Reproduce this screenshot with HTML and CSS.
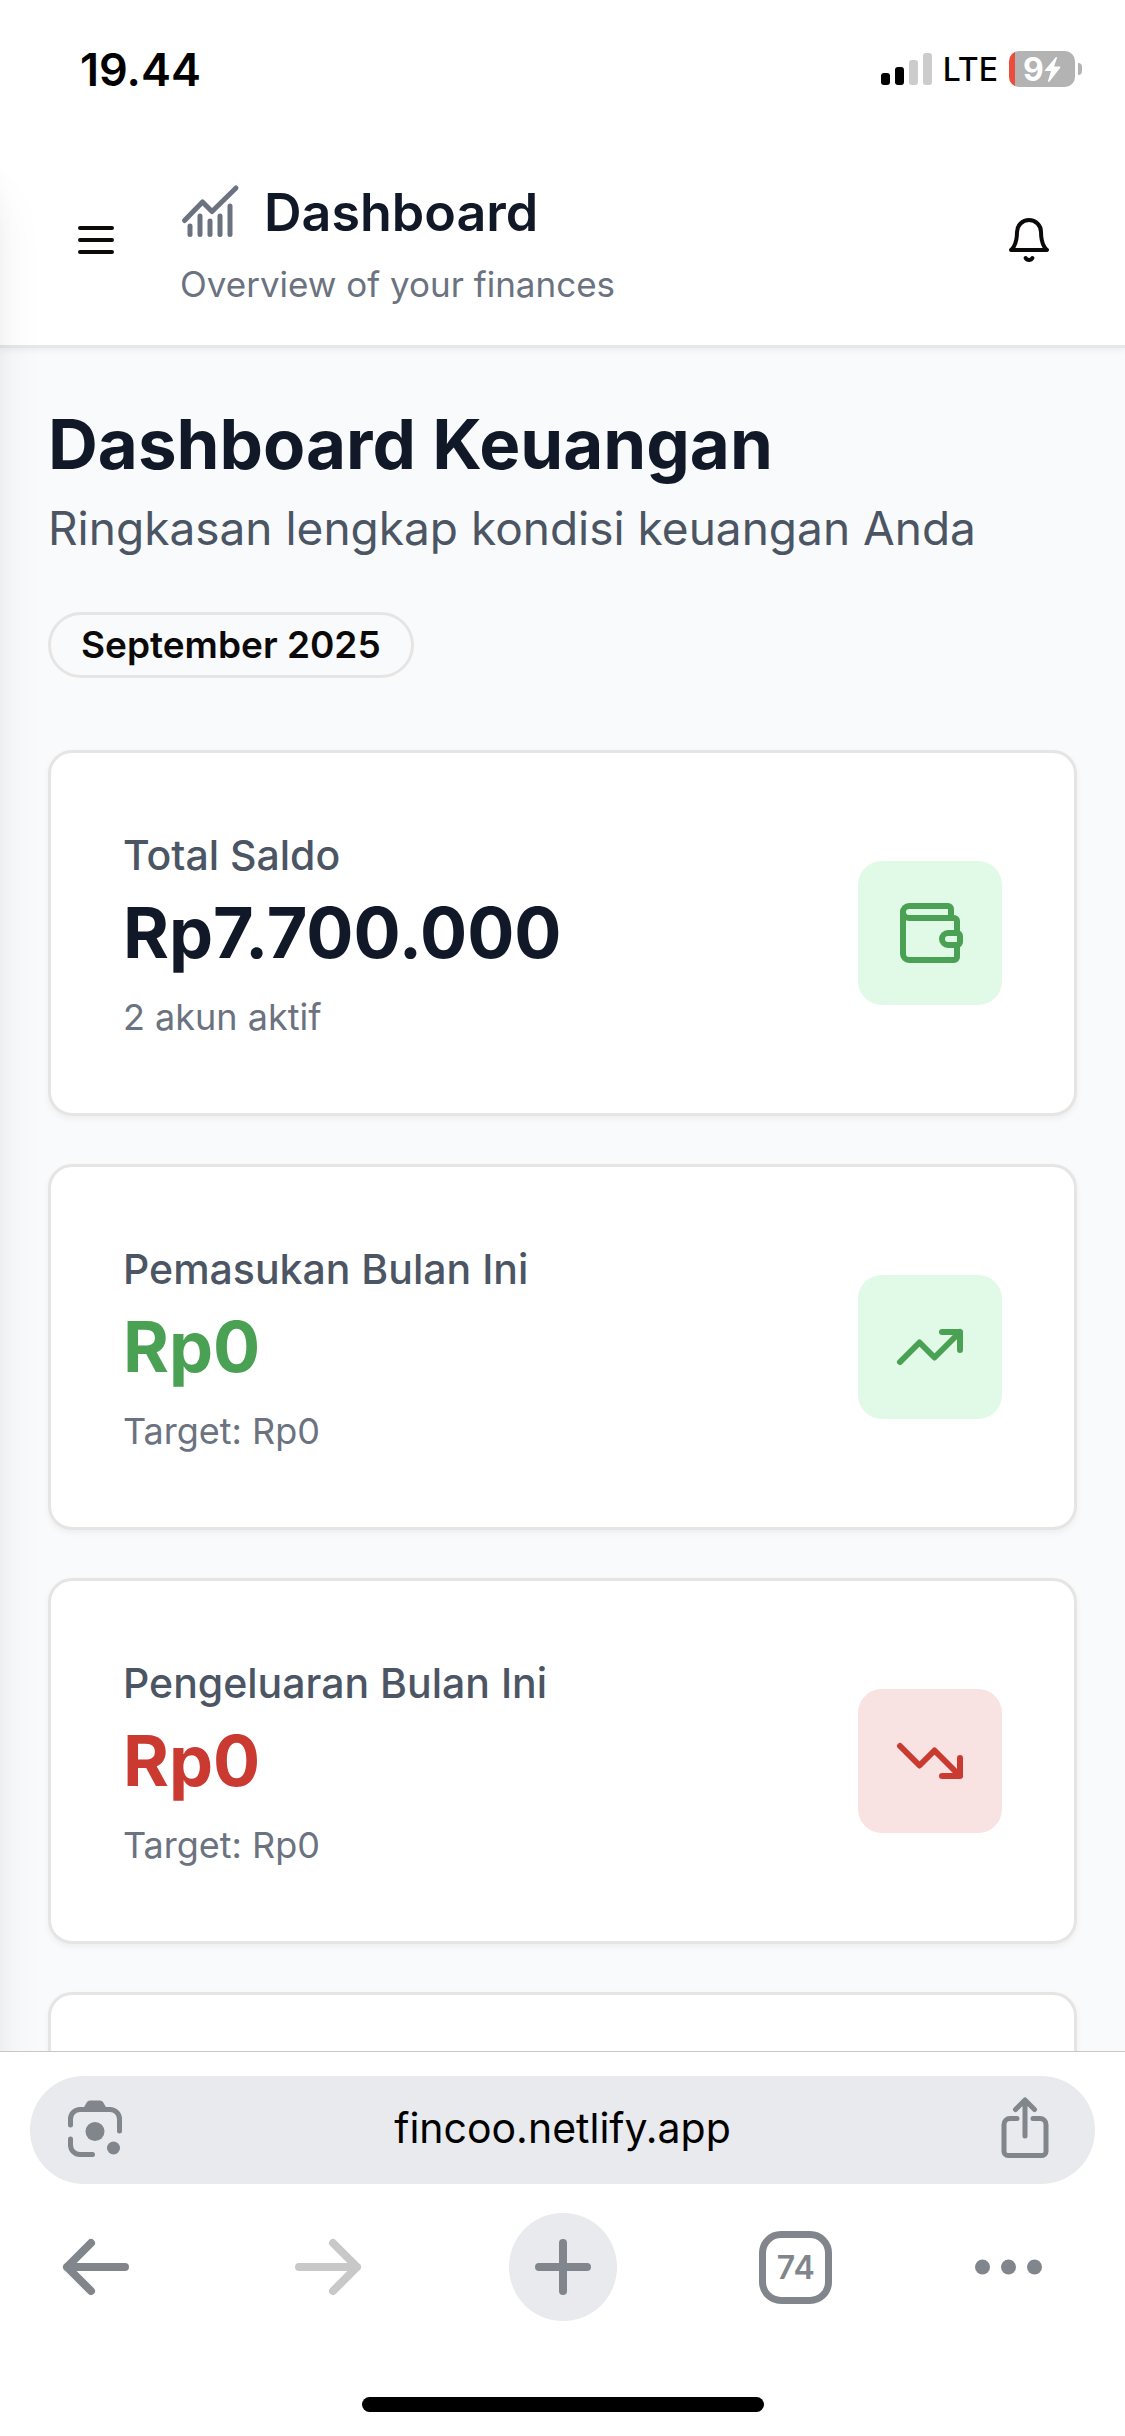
FILE: index.html
```html
<!DOCTYPE html>
<html lang="id">
<head>
<meta charset="utf-8">
<meta name="viewport" content="width=device-width, initial-scale=1">
<title>Dashboard Keuangan</title>
<link rel="stylesheet" href="styles.css">
</head>
<body>
<div class="status">
  <span class="status-time">19.44</span>
  <div class="status-right">
    <svg class="signal" viewBox="0 0 51 32" aria-hidden="true">
      <rect x="0" y="20" width="9" height="12" rx="3"/>
      <rect x="14" y="14" width="9" height="18" rx="3"/>
      <rect class="dim" x="28" y="7" width="9" height="25" rx="3"/>
      <rect class="dim" x="42" y="0" width="9" height="32" rx="3"/>
    </svg>
    <span class="network">LTE</span>
    <div class="battery">
      <span>9</span>
      <svg class="bolt" viewBox="0 0 17 25" aria-hidden="true"><path d="M12 0 1 13q-1 1 .5 1H7L4 24q0 1.500 1.500.5L16 11q1-1.500-.5-1.500H10L13 1q0-1.500-1-1z"/></svg>
    </div>
  </div>
</div>

<div class="page">
  <header class="header">
    <button class="icon-button" aria-label="Menu">
      <svg class="icon" viewBox="0 0 24 24"><path d="M4 6h16M4 12h16M4 18h16"/></svg>
    </button>
    <div class="header-text">
      <div class="header-title">
        <svg class="chart" viewBox="0 0 60 60" aria-hidden="true"><path d="M4.500 38.500 22.500 20 32 29.500 56 6M10 44v8.500M20 34v18.500M30 39v13.500M40 34v18.500M50 24v28.500"/></svg>
        <h2>Dashboard</h2>
      </div>
      <p>Overview of your finances</p>
    </div>
    <button class="icon-button" aria-label="Notifications">
      <svg class="icon" viewBox="0 0 24 24"><path d="M6 8a6 6 0 0 1 12 0c0 7 3 9 3 9H3s3-2 3-9"/><path d="M10.300 21a1.940 1.940 0 0 0 3.400 0"/></svg>
    </button>
  </header>

  <main class="content">
    <div class="intro">
      <div>
        <h1>Dashboard Keuangan</h1>
        <p>Ringkasan lengkap kondisi keuangan Anda</p>
      </div>
      <span class="badge">September 2025</span>
    </div>
    <section class="cards">
      <article class="card">
        <div>
          <p class="label">Total Saldo</p>
          <p class="value">Rp7.700.000</p>
          <p class="note">2 akun aktif</p>
        </div>
        <div class="tile green">
          <svg class="icon" viewBox="0 0 24 24"><path d="M19 7V4a1 1 0 0 0-1-1H5a2 2 0 0 0 0 4h15a1 1 0 0 1 1 1v4h-3a2 2 0 0 0 0 4h3a1 1 0 0 0 1-1v-2a1 1 0 0 0-1-1"/><path d="M3 5v14a2 2 0 0 0 2 2h15a1 1 0 0 0 1-1v-4"/></svg>
        </div>
      </article>
      <article class="card">
        <div>
          <p class="label">Pemasukan Bulan Ini</p>
          <p class="value income">Rp0</p>
          <p class="note">Target: Rp0</p>
        </div>
        <div class="tile green">
          <svg class="icon" viewBox="0 0 24 24"><path d="m22 7-8.500 8.500-5-5L2 17M16 7h6v6"/></svg>
        </div>
      </article>
      <article class="card">
        <div>
          <p class="label">Pengeluaran Bulan Ini</p>
          <p class="value expense">Rp0</p>
          <p class="note">Target: Rp0</p>
        </div>
        <div class="tile red">
          <svg class="icon" viewBox="0 0 24 24"><path d="m22 17-8.500-8.500-5 5L2 7M16 17h6v-6"/></svg>
        </div>
      </article>
      <article class="card"></article>
    </section>
  </main>
  <aside class="drawer" aria-hidden="true"></aside>
</div>

<footer class="browser">
  <div class="address">
    <button aria-label="Lens">
      <svg class="lens" viewBox="0 0 60 60"><path class="line" d="M5.500 25v-6a9.500 9.500 0 0 1 9.500-9.500h30a9.500 9.500 0 0 1 9.500 9.500v12M5.500 39v6a9.500 9.500 0 0 0 9.500 9.500h12.500"/><path d="m18 9 4-7q1-1.500 3-1.500h10q2 0 3 1.500l4 7z"/><circle cx="30" cy="31.500" r="9.500"/><circle cx="48.500" cy="48" r="6.500"/></svg>
    </button>
    <input type="text" value="fincoo.netlify.app" aria-label="Address">
    <button aria-label="Share">
      <svg class="share" viewBox="0 0 60 60"><path class="line" d="M22 18.500h-7a6 6 0 0 0-6 6v27a4 4 0 0 0 4 4h34a4 4 0 0 0 4-4v-27a6 6 0 0 0-6-6h-7M30 36V0M20.500 9.500 30 0l9.500 9.500"/></svg>
    </button>
  </div>
  <nav class="tools">
    <button aria-label="Back"><svg class="arrow" viewBox="0 0 68 60"><path d="M63 30H5M29 6 5 30l24 24"/></svg></button>
    <button aria-label="Forward" disabled><svg class="arrow" viewBox="0 0 68 60"><path d="M4 30h58M38 6l24 24-24 24"/></svg></button>
    <button class="new-tab" aria-label="New tab"><svg class="plus" viewBox="0 0 56 56"><path d="M28 4v48M4 28h48"/></svg></button>
    <button aria-label="Tabs"><span class="tab-count">74</span></button>
    <button class="more" aria-label="More"><svg class="dots" viewBox="0 0 68 16"><circle cx="7.500" cy="8" r="7.500"/><circle cx="33.500" cy="8" r="7.500"/><circle cx="59.500" cy="8" r="7.500"/></svg></button>
  </nav>
  <div class="home-bar"></div>
</footer>
</body>
</html>
```
FILE: styles.css
```css
* {
  box-sizing: border-box;
  margin: 0;
}

body {
  display: flex;
  flex-direction: column;
  height: 100vh;
  background: #fff;
  color: #0c0a09;
  font-family: Inter, "Liberation Sans", sans-serif;
}

button {
  display: flex;
  align-items: center;
  justify-content: center;
  padding: 0;
  border: 0;
  background: none;
  color: inherit;
  font: inherit;
}

svg {
  display: block;
  flex: none;
  overflow: visible;
}

.icon {
  width: 48px;
  height: 48px;
  fill: none;
  stroke: currentColor;
  stroke-width: 2;
  stroke-linecap: round;
  stroke-linejoin: round;
}

/* Status bar */
.status {
  display: flex;
  flex: none;
  align-items: center;
  justify-content: space-between;
  height: 135px;
  padding: 3px 50px 0 80px;
  color: #000;
}

.status-time {
  font-size: 45px;
  font-weight: 600;
}

.status-right {
  display: flex;
  align-items: center;
  gap: 11px;
}

.signal {
  width: 51px;
  height: 32px;
}

.dim {
  fill: #ccc;
}

.network {
  font-size: 32px;
  font-weight: 500;
}

.battery {
  position: relative;
  display: flex;
  align-items: center;
  justify-content: center;
  width: 66px;
  height: 36px;
  border-radius: 10px;
  background: linear-gradient(to right, #eb4d3d 6px, #b3b3b3 6px);
  color: #fff;
  font-size: 32px;
  font-weight: 700;
}

.battery::after {
  content: "";
  position: absolute;
  right: -7px;
  width: 4px;
  height: 12px;
  border-radius: 0 4px 4px 0;
  background: #b3b3b3;
}

.bolt {
  width: 17px;
  height: 25px;
  fill: #fff;
}

/* Page */
.page {
  position: relative;
  flex: 1;
  min-height: 0;
  overflow: hidden;
  background: #f9fafb;
}

.drawer {
  position: absolute;
  top: 0;
  bottom: -300px;
  left: -300px;
  width: 300px;
  box-shadow: 0 60px 50px -10px rgba(0, 0, 0, 0.1), 0 24px 30px -18px rgba(0, 0, 0, 0.1);
}

.header {
  position: relative;
  display: flex;
  align-items: center;
  gap: 36px;
  padding: 31px 48px;
  border-bottom: 3px solid #e5e7eb;
  background: #fff;
  box-shadow: 0 3px 6px rgba(0, 0, 0, 0.05);
}

.icon-button {
  width: 96px;
  height: 96px;
}

.header-text {
  flex: 1;
  padding-top: 4px;
}

.header-title {
  display: flex;
  align-items: center;
  gap: 24px;
  height: 84px;
}

.header-title h2 {
  color: #111827;
  font-size: 52px;
  font-weight: 600;
}

.header-text p {
  color: #6b7280;
  font-size: 35px;
  line-height: 60px;
}

.chart {
  width: 60px;
  height: 60px;
  fill: none;
  stroke: #6b7280;
  stroke-width: 5;
  stroke-linecap: round;
  stroke-linejoin: round;
}

.content {
  display: flex;
  flex-direction: column;
  gap: 72px;
  padding: 48px;
}

.intro {
  display: flex;
  flex-direction: column;
  align-items: flex-start;
  gap: 48px;
}

.intro h1 {
  color: #111827;
  font-size: 69px;
  font-weight: 700;
  line-height: 96px;
}

.intro p {
  color: #4b5563;
  font-size: 46px;
  line-height: 72px;
}

.badge {
  padding: 6px 30px;
  border: 3px solid #e7e5e4;
  border-radius: 33px;
  font-size: 37px;
  font-weight: 600;
  line-height: 48px;
}

.cards {
  display: grid;
  gap: 48px;
}

.card {
  display: flex;
  align-items: center;
  justify-content: space-between;
  min-height: 366px;
  padding: 72px;
  border: 3px solid #e7e5e4;
  border-radius: 24px;
  background: #fff;
  box-shadow: 0 3px 6px rgba(0, 0, 0, 0.05);
}

.label {
  color: #4b5563;
  font-size: 41px;
  font-weight: 500;
  line-height: 60px;
}

.value {
  margin-bottom: 12px;
  color: #111827;
  font-size: 70px;
  font-weight: 700;
  line-height: 96px;
}

.income {
  color: #4ba153;
}

.expense {
  color: #cb3a31;
}

.note {
  color: #6b7280;
  font-size: 36px;
  line-height: 48px;
}

.tile {
  padding: 36px;
  border-radius: 24px;
}

.tile .icon {
  width: 72px;
  height: 72px;
}

.green {
  background: #e1f9e7;
  color: #4ba153;
}

.red {
  background: #f8e2e2;
  color: #cb3a31;
}

/* Browser toolbar */
.browser {
  flex: none;
  padding: 24px 30px;
  border-top: 1px solid #c8c8c8;
  background: #fff;
  color: #80868b;
}

.address {
  display: flex;
  align-items: center;
  height: 108px;
  padding: 0 40px 0 35px;
  border-radius: 54px;
  background: #e8eaed;
}

.address input {
  flex: 1;
  min-width: 0;
  padding: 0 0 4px 5px;
  border: 0;
  background: none;
  color: #000;
  font: inherit;
  font-size: 41px;
  text-align: center;
}

.lens,
.share {
  width: 60px;
  height: 60px;
  fill: currentColor;
}

.line {
  fill: none;
  stroke: currentColor;
  stroke-width: 5;
  stroke-linecap: round;
  stroke-linejoin: round;
}

.tools {
  display: flex;
  justify-content: space-between;
  margin-top: 29px;
  padding: 0 12px;
}

.tools button {
  width: 108px;
  height: 108px;
  border-radius: 54px;
}

.tools button:disabled {
  color: #c8c8c8;
}

.tools .new-tab {
  background: #e8eaed;
}

.tools .more {
  justify-content: flex-start;
}

.arrow,
.plus {
  fill: none;
  stroke: currentColor;
  stroke-width: 8;
  stroke-linecap: round;
  stroke-linejoin: round;
}

.arrow {
  width: 68px;
  height: 60px;
}

.plus {
  width: 56px;
  height: 56px;
}

.dots {
  width: 68px;
  height: 16px;
  fill: currentColor;
}

.tab-count {
  width: 73px;
  border: 7px solid;
  border-radius: 22px;
  font-size: 32px;
  font-weight: 600;
  line-height: 59px;
}

.home-bar {
  width: 402px;
  height: 15px;
  margin: 76px auto 0;
  border-radius: 8px;
  background: #000;
}
```
